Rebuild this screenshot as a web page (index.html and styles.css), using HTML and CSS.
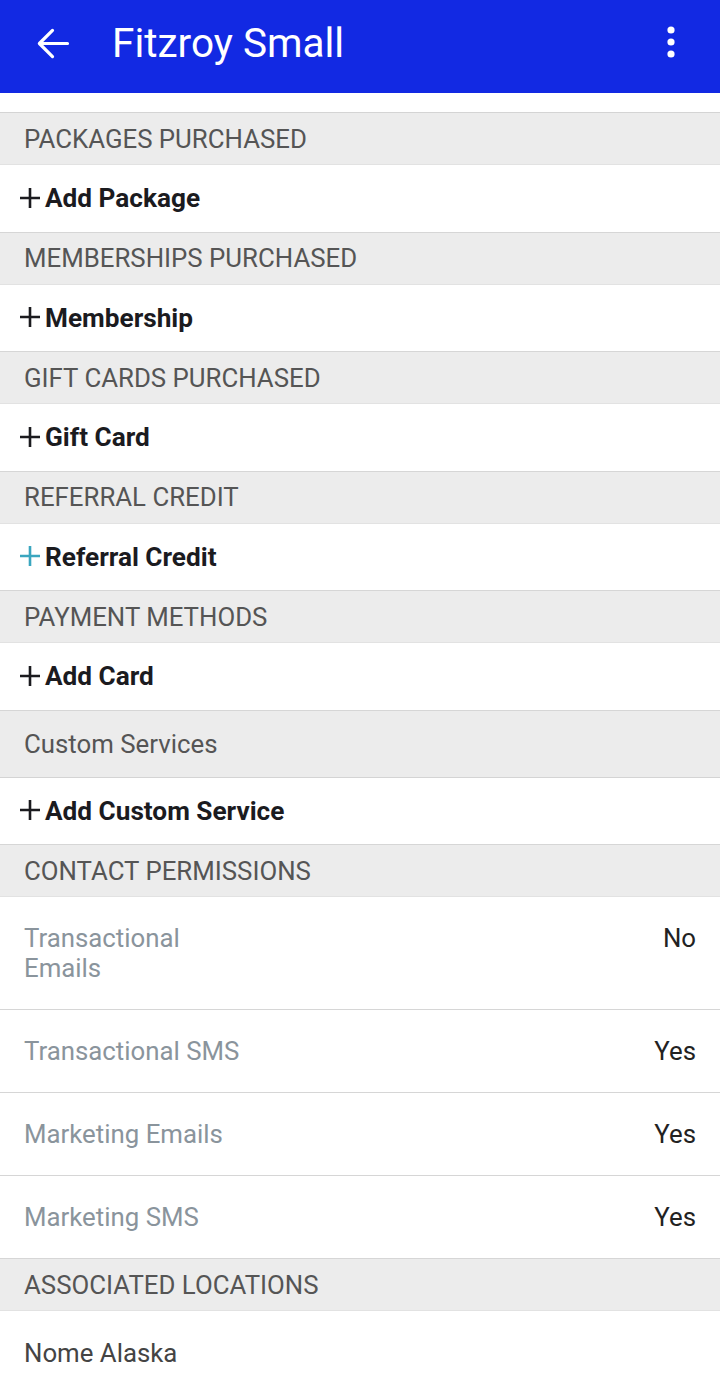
FILE: index.html
```html
<!DOCTYPE html>
<html>
<head>
<meta charset="utf-8">
<link rel="stylesheet" href="styles.css">
</head>
<body>
<div class="appbar">
  <svg class="back" viewBox="0 0 24 24" width="45" height="45"><path d="M20 12H5.5M12 5l-7 7 7 7" fill="none" stroke="#fff" stroke-width="1.7" stroke-linecap="round" stroke-linejoin="round"/></svg>
  <div class="title">Fitzroy Small</div>
  <svg class="kebab" viewBox="0 0 10 36" width="10" height="36"><circle cx="5" cy="5" r="3.6" fill="#fff"/><circle cx="5" cy="17" r="3.6" fill="#fff"/><circle cx="5" cy="29" r="3.6" fill="#fff"/></svg>
</div>
<div class="spacer"></div>

<div class="sec">PACKAGES PURCHASED</div>
<div class="row"><svg class="plus" viewBox="0 0 20 20"><path d="M10 0V20M0 10H20"/></svg>Add Package</div>
<div class="sec">MEMBERSHIPS PURCHASED</div>
<div class="row"><svg class="plus" viewBox="0 0 20 20"><path d="M10 0V20M0 10H20"/></svg>Membership</div>
<div class="sec">GIFT CARDS PURCHASED</div>
<div class="row"><svg class="plus" viewBox="0 0 20 20"><path d="M10 0V20M0 10H20"/></svg>Gift Card</div>
<div class="sec">REFERRAL CREDIT</div>
<div class="row"><svg class="plus teal" viewBox="0 0 20 20"><path d="M10 0V20M0 10H20"/></svg>Referral Credit</div>
<div class="sec">PAYMENT METHODS</div>
<div class="row"><svg class="plus" viewBox="0 0 20 20"><path d="M10 0V20M0 10H20"/></svg>Add Card</div>
<div class="sec tall">Custom Services</div>
<div class="row"><svg class="plus" viewBox="0 0 20 20"><path d="M10 0V20M0 10H20"/></svg>Add Custom Service</div>
<div class="sec">CONTACT PERMISSIONS</div>
<div class="perm"><div class="label narrow">Transactional Emails</div><div class="val">No</div></div>
<div class="perm"><div class="label">Transactional SMS</div><div class="val">Yes</div></div>
<div class="perm"><div class="label">Marketing Emails</div><div class="val">Yes</div></div>
<div class="perm"><div class="label">Marketing SMS</div><div class="val">Yes</div></div>
<div class="sec">ASSOCIATED LOCATIONS</div>
<div class="loc">Nome Alaska</div>
</body>
</html>
```
FILE: styles.css
```css
html, body {
  margin: 0;
  padding: 0;
  background: #fff;
  font-family: Roboto, "Noto Sans", sans-serif;
}
.appbar {
  height: 93px;
  background: #1229e3;
  display: flex;
  align-items: center;
  color: #fff;
}
.back {
  margin-left: 30px;
  margin-top: -6px;
  flex: none;
}
.title {
  margin-left: 37px;
  font-size: 40.5px;
  margin-top: -8px;
  flex: 1;
}
.kebab {
  margin-right: 44px;
  margin-top: -7px;
  flex: none;
}
.spacer {
  height: 19px;
  border-bottom: 1px solid #d4d4d4;
}
.sec {
  height: 51px;
  background: #ececec;
  border-bottom: 1px solid #e2e2e2;
  display: flex;
  align-items: center;
  padding-left: 24px;
  font-size: 25.8px;
  color: #555;
}
.sec.tall {
  height: 66px;
  border-bottom-color: #d4d4d4;
}
.row {
  height: 66.5px;
  border-bottom: 1px solid #d6d6d6;
  display: flex;
  align-items: center;
  padding-left: 20px;
  font-size: 26.2px;
  font-weight: 700;
  color: #1b1b1f;
}
.plus {
  width: 20px;
  height: 20px;
  margin-right: 5px;
  margin-top: -1px;
  flex: none;
  fill: none;
  stroke: #1b1b1f;
  stroke-width: 2.6;
}
.plus.teal {
  stroke: #3aa6bf;
}
.perm {
  display: flex;
  justify-content: space-between;
  align-items: flex-start;
  padding: 26px 24px;
  border-bottom: 1px solid #d6d6d6;
  font-size: 25.8px;
  line-height: 30px;
}
.label {
  color: #8a949c;
}
.label.narrow {
  width: 180px;
}
.val {
  color: #222;
}
.loc {
  padding: 27px 24px;
  font-size: 25.8px;
  line-height: 30px;
  color: #444;
}
```
